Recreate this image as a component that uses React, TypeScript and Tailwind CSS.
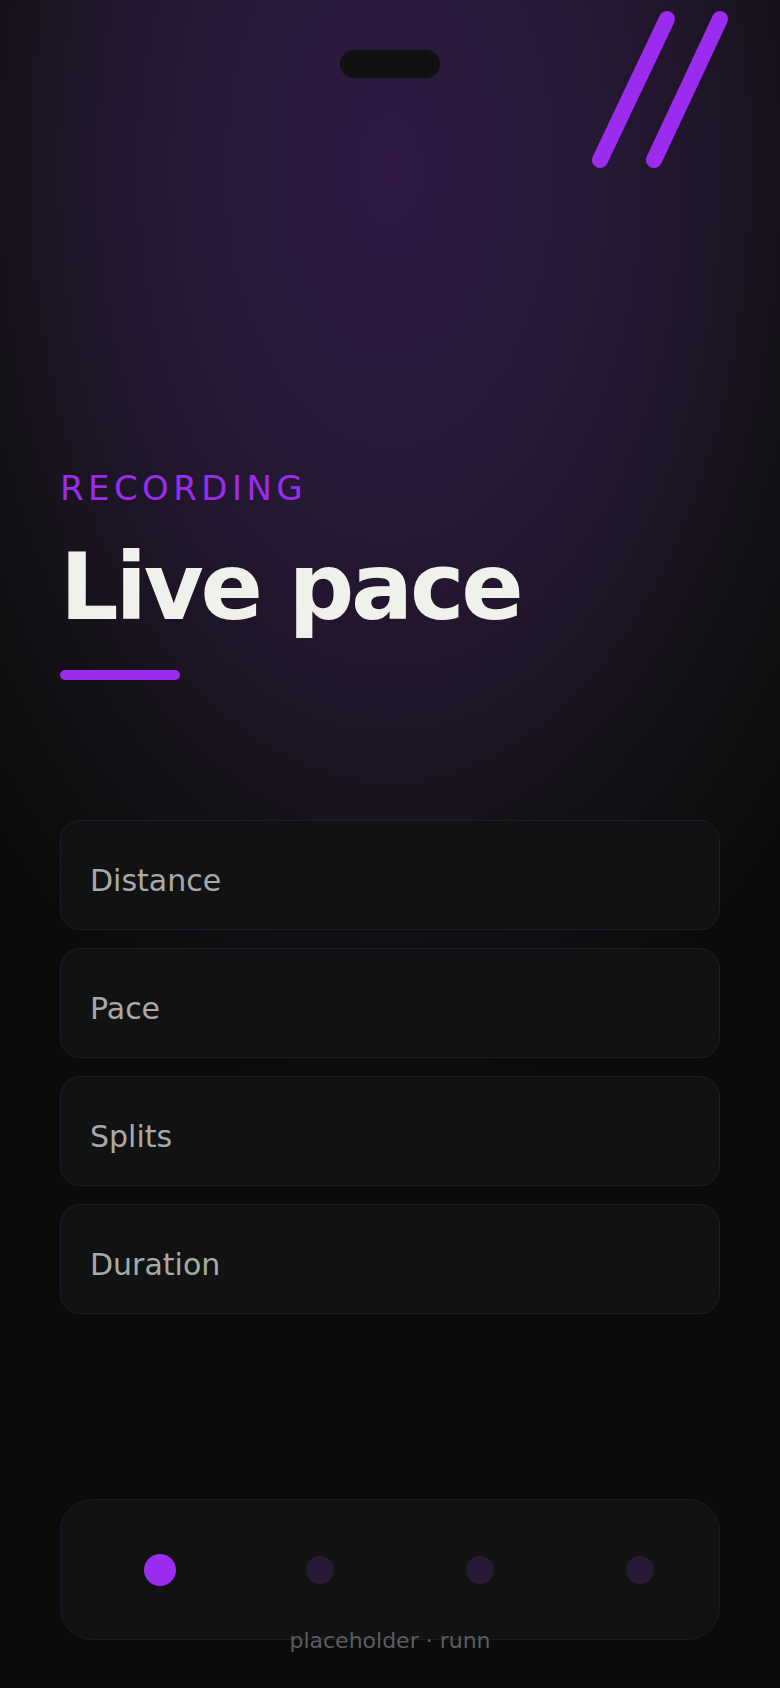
import React from "react";

const metrics = ["Distance", "Pace", "Splits", "Duration"];

function Slashes() {
  return (
    <svg
      className="absolute right-0 top-0"
      width="200"
      height="190"
      viewBox="580 0 200 190"
      fill="none"
    >
      <line x1="667" y1="19" x2="600" y2="160" stroke="#9b2cef" strokeWidth="16" strokeLinecap="round" />
      <line x1="720" y1="19" x2="654" y2="160" stroke="#9b2cef" strokeWidth="16" strokeLinecap="round" />
    </svg>
  );
}

export default function App() {
  return (
    <div className="relative flex min-h-[1688px] w-full flex-col overflow-hidden bg-[#0a0c0a] bg-[radial-gradient(ellipse_70%_55%_at_50%_10%,#2e1842_0%,#271a38_30%,#1f1529_57%,#151218_75%,#0a0c0a_100%)] px-[60px] font-['DejaVu_Sans',sans-serif]">
      <Slashes />

      <div className="mx-auto mt-[50px] h-[28px] w-[100px] rounded-full bg-[#101211]" />

      <div className="mt-[393px] flex flex-col">
        <p className="text-[34px] leading-none tracking-[0.13em] text-[#9b2cef]">RECORDING</p>
        <h1 className="mt-[37px] text-[92px] font-bold leading-none tracking-[-0.035em] text-[#eef2ea]">
          Live pace
        </h1>
        <div className="mt-[36px] h-[10px] w-[120px] rounded-full bg-[#9b2cef]" />
      </div>

      <div className="mt-[140px] flex flex-col gap-[18px]">
        {metrics.map((m) => (
          <div
            key={m}
            className="flex h-[110px] items-center rounded-[20px] border border-[#21192c] bg-[#111313] px-[29px] pt-[10px]"
          >
            <span className="text-[30px] text-[#a9aaa8]">{m}</span>
          </div>
        ))}
      </div>

      <nav className="mb-[48px] mt-auto grid h-[141px] grid-cols-[repeat(4,160px)] items-center rounded-[32px] border border-[#1e1827] bg-[#111313] pl-[19px]">
        {[0, 1, 2, 3].map((i) => (
          <div key={i} className="flex justify-center">
            {i === 0 ? (
              <span className="h-[32px] w-[32px] rounded-full bg-[#9b2cef]" />
            ) : (
              <span className="h-[28px] w-[28px] rounded-full bg-[#261a35]" />
            )}
          </div>
        ))}
      </nav>

      <p className="absolute bottom-[36px] left-0 right-0 text-center text-[22px] leading-none text-[#5c5c60]">
        placeholder · runn
      </p>
    </div>
  );
}
